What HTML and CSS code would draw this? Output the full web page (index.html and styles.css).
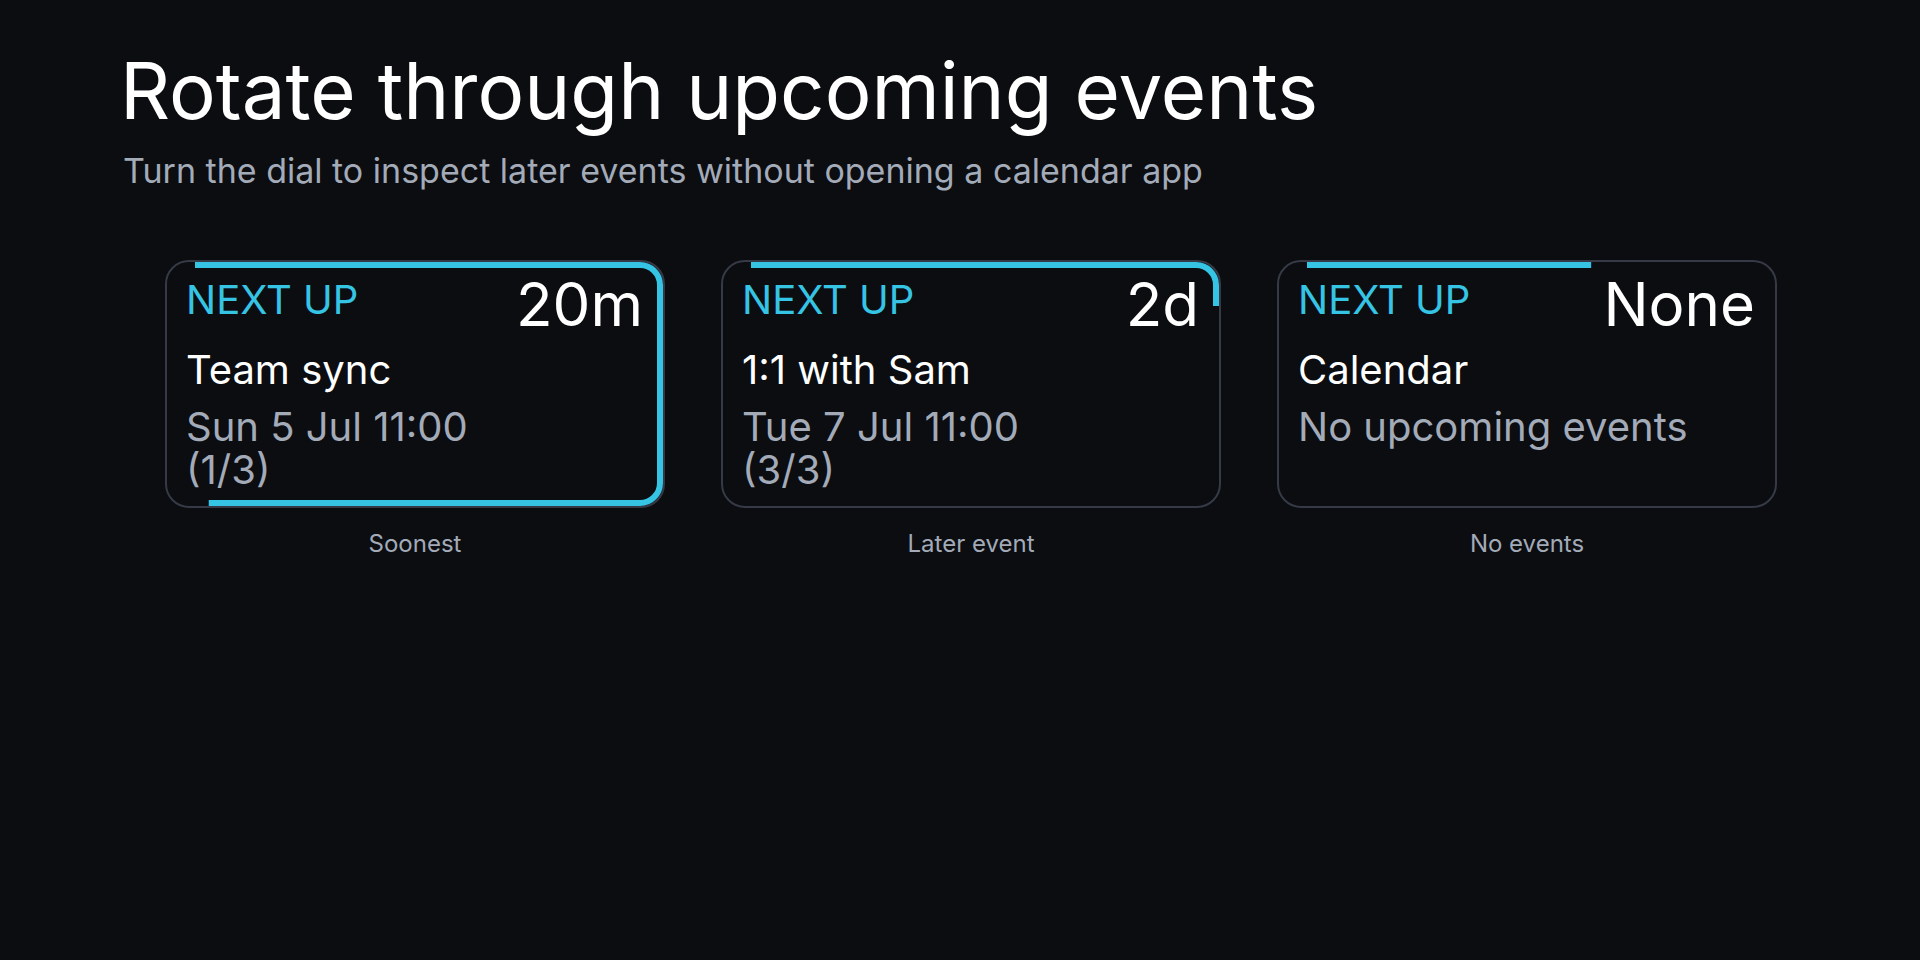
FILE: index.html
```html
<!DOCTYPE html>
<html lang="en">
<head>
    <meta charset="UTF-8">
    <meta name="viewport" content="width=device-width, initial-scale=1.0">
    <title>Next up</title>
    <link rel="stylesheet" href="styles.css">
</head>
<body>
    <div class="page">
        <h1>Rotate through upcoming events</h1>
        <p class="subtitle">Turn the dial to inspect later events without opening a calendar app</p>

        <div class="cards">
            <div class="slot">
                <div class="card">
                    <svg class="ring" viewBox="0 0 496 244">
                        <path d="M28 3 H473 A20 20 0 0 1 493 23 V221 A20 20 0 0 1 473 241 H23 A20 20 0 0 1 3 221 V23 A20 20 0 0 1 23 3 Z" pathLength="100" style="stroke-dasharray: 80 100"/>
                    </svg>
                    <div class="card-top">
                        <span class="label">NEXT UP</span>
                        <span class="value">20m</span>
                    </div>
                    <div class="title">Team sync</div>
                    <div class="detail">Sun 5 Jul 11:00<br>(1/3)</div>
                </div>
                <p class="caption">Soonest</p>
            </div>

            <div class="slot">
                <div class="card">
                    <svg class="ring" viewBox="0 0 496 244">
                        <path d="M28 3 H473 A20 20 0 0 1 493 23 V221 A20 20 0 0 1 473 241 H23 A20 20 0 0 1 3 221 V23 A20 20 0 0 1 23 3 Z" pathLength="100" style="stroke-dasharray: 35 100"/>
                    </svg>
                    <div class="card-top">
                        <span class="label">NEXT UP</span>
                        <span class="value">2d</span>
                    </div>
                    <div class="title">1:1 with Sam</div>
                    <div class="detail">Tue 7 Jul 11:00<br>(3/3)</div>
                </div>
                <p class="caption">Later event</p>
            </div>

            <div class="slot">
                <div class="card">
                    <svg class="ring" viewBox="0 0 496 244">
                        <path d="M28 3 H473 A20 20 0 0 1 493 23 V221 A20 20 0 0 1 473 241 H23 A20 20 0 0 1 3 221 V23 A20 20 0 0 1 23 3 Z" pathLength="100" style="stroke-dasharray: 20 100"/>
                    </svg>
                    <div class="card-top">
                        <span class="label">NEXT UP</span>
                        <span class="value">None</span>
                    </div>
                    <div class="title">Calendar</div>
                    <div class="detail">No upcoming events</div>
                </div>
                <p class="caption">No events</p>
            </div>
        </div>
    </div>
</body>
</html>
```

FILE: styles.css
```css
body {
  margin: 0;
  background-color: #0b0d11;
  color: #ffffff;
  font-family: Inter, "Noto Sans", sans-serif;
}

.page {
  padding: 44px 120px 0 120px;
}

h1 {
  margin: 0;
  font-size: 78px;
  font-weight: 400;
  line-height: 1.21;
}

.subtitle {
  margin: 12px 0 0 3px;
  font-size: 34px;
  color: #a3aab8;
}

.cards {
  display: flex;
  gap: 56px;
  margin-top: 69px;
  padding-left: 45px;
}

.slot {
  width: 500px;
  display: flex;
  flex-direction: column;
  align-items: center;
}

.card {
  position: relative;
  box-sizing: border-box;
  width: 500px;
  height: 248px;
  padding: 13px 20px 13px 19px;
  border: 2px solid #353a46;
  border-radius: 24px;
  background-color: #0b0d11;
}

/* progress stroke that runs clockwise round the card */
.ring {
  position: absolute;
  left: 0;
  top: 0;
  width: 496px;
  height: 244px;
  overflow: visible;
}

.ring path {
  fill: none;
  stroke: #36c4e4;
  stroke-width: 6;
}

.card-top {
  display: flex;
  justify-content: space-between;
  align-items: flex-start;
}

.label {
  margin-top: 2px;
  font-size: 40px;
  line-height: 1.15;
  color: #36c4e4;
}

.value {
  margin-top: -1px;
  font-size: 60px;
  line-height: 1;
}

.title {
  margin-top: 11px;
  font-size: 40px;
}

.detail {
  margin-top: 12px;
  font-size: 40px;
  line-height: 1.06;
  color: #a3aab8;
}

.caption {
  margin: 21px 0 0 0;
  font-size: 24px;
  color: #a3aab8;
}
```
